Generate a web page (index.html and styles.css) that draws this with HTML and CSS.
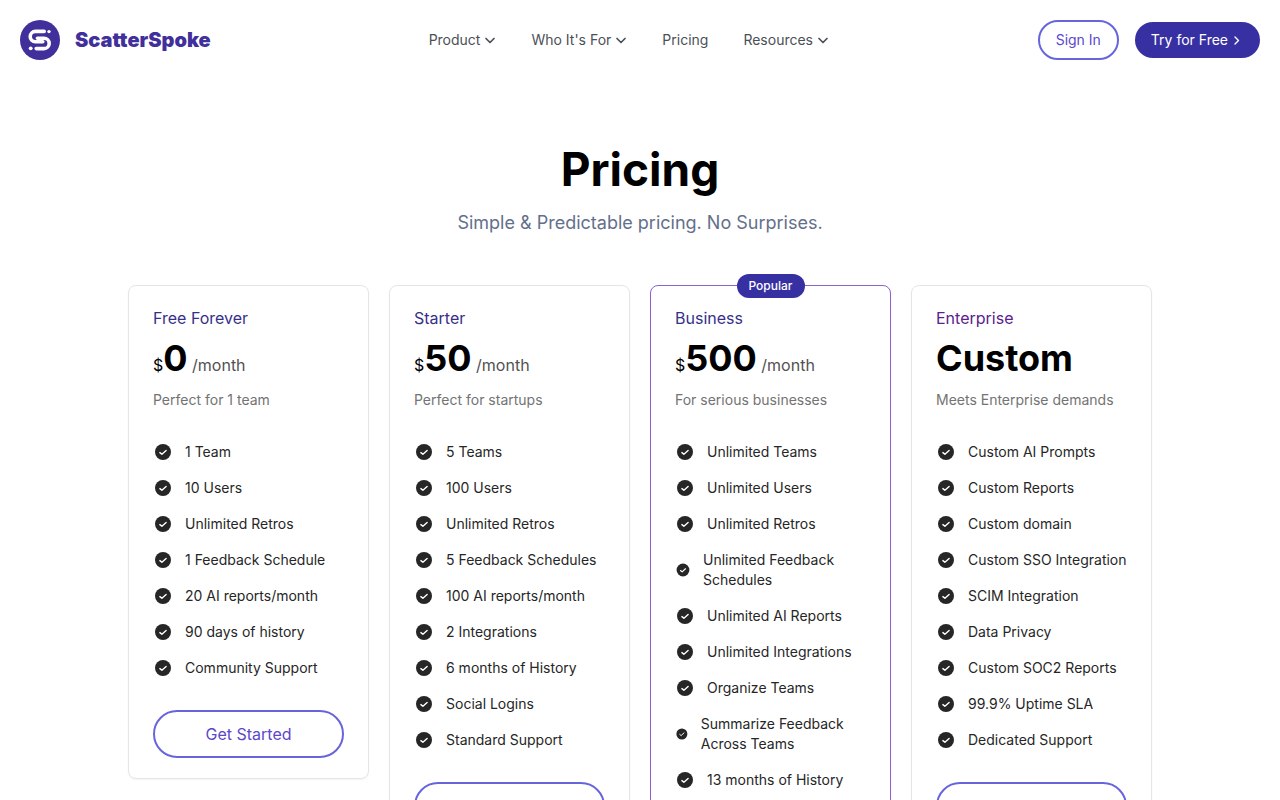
FILE: index.html
```html
<!DOCTYPE html>
<html lang="en">

<head>
  <meta charset="UTF-8" />
  <meta name="viewport" content="width=device-width, initial-scale=1.0" />
  <title>Pricing - ScatterSpoke</title>
  <link rel="stylesheet" href="styles.css">
</head>

<body>
  <!-- Shared icons -->
  <svg class="sprite" aria-hidden="true">
    <symbol id="check" viewBox="0 0 20 20">
      <circle cx="10" cy="10" r="8" fill="currentColor" />
      <path d="M6.9 10.6l2 1.7 4.2-3.9" fill="none" stroke="#fff" stroke-width="1.4" stroke-linecap="round" stroke-linejoin="round" />
    </symbol>
    <symbol id="chevron" viewBox="0 0 12 12">
      <path d="M2 4.5l4 4 4-4" fill="none" stroke="currentColor" stroke-width="1.7" stroke-linecap="round" stroke-linejoin="round" />
    </symbol>
  </svg>

  <!-- Header -->
  <header class="header">
    <a href="#" class="logo">
      <svg class="logo-mark" viewBox="0 0 40 40" aria-hidden="true">
        <circle cx="20" cy="20" r="20" fill="#41309b" />
        <path d="M24.2 11.4H15.4a5.2 5.2 0 0 0 0 10.4h7.4" fill="none" stroke="#fff" stroke-width="3.6" stroke-linecap="round" />
        <path d="M17.4 18.2h6.6a5.2 5.2 0 0 1 0 10.4h-7.8" fill="none" stroke="#fff" stroke-width="3.6" stroke-linecap="round" />
        <circle cx="29" cy="11.6" r="1.7" fill="#fff" />
        <circle cx="10.7" cy="28.3" r="1.9" fill="#fff" />
      </svg>
      <span class="logo-name">ScatterSpoke</span>
    </a>
    <nav class="nav">
      <button type="button" class="nav-item">Product <svg class="chevron"><use href="#chevron" /></svg></button>
      <button type="button" class="nav-item">Who It's For <svg class="chevron"><use href="#chevron" /></svg></button>
      <a href="#" class="nav-item">Pricing</a>
      <button type="button" class="nav-item">Resources <svg class="chevron"><use href="#chevron" /></svg></button>
    </nav>
    <div class="actions">
      <a href="#" class="sign-in">Sign In</a>
      <a href="#" class="try-free">Try for Free
        <svg class="arrow" viewBox="0 0 12 12"><path d="M3 3l3.5 3.5L3 10" fill="none" stroke="currentColor" stroke-width="1.4" stroke-linecap="round" stroke-linejoin="round" /></svg>
      </a>
    </div>
  </header>

  <!-- Pricing -->
  <main class="pricing">
    <h1>Pricing</h1>
    <p class="subtitle">Simple &amp; Predictable pricing. No Surprises.</p>

    <div class="plans">
      <section class="plan">
        <h2>Free Forever</h2>
        <p class="price">$<strong>0</strong> <span class="period">/month</span></p>
        <p class="about">Perfect for 1 team</p>
        <ul>
          <li><svg><use href="#check" /></svg><span>1 Team</span></li>
          <li><svg><use href="#check" /></svg><span>10 Users</span></li>
          <li><svg><use href="#check" /></svg><span>Unlimited Retros</span></li>
          <li><svg><use href="#check" /></svg><span>1 Feedback Schedule</span></li>
          <li><svg><use href="#check" /></svg><span>20 AI reports/month</span></li>
          <li><svg><use href="#check" /></svg><span>90 days of history</span></li>
          <li><svg><use href="#check" /></svg><span>Community Support</span></li>
        </ul>
        <a href="#" class="start">Get Started</a>
      </section>

      <section class="plan">
        <h2>Starter</h2>
        <p class="price">$<strong>50</strong> <span class="period">/month</span></p>
        <p class="about">Perfect for startups</p>
        <ul>
          <li><svg><use href="#check" /></svg><span>5 Teams</span></li>
          <li><svg><use href="#check" /></svg><span>100 Users</span></li>
          <li><svg><use href="#check" /></svg><span>Unlimited Retros</span></li>
          <li><svg><use href="#check" /></svg><span>5 Feedback Schedules</span></li>
          <li><svg><use href="#check" /></svg><span>100 AI reports/month</span></li>
          <li><svg><use href="#check" /></svg><span>2 Integrations</span></li>
          <li><svg><use href="#check" /></svg><span>6 months of History</span></li>
          <li><svg><use href="#check" /></svg><span>Social Logins</span></li>
          <li><svg><use href="#check" /></svg><span>Standard Support</span></li>
        </ul>
        <a href="#" class="start">Get Started</a>
      </section>

      <section class="plan popular">
        <span class="badge">Popular</span>
        <h2>Business</h2>
        <p class="price">$<strong>500</strong> <span class="period">/month</span></p>
        <p class="about">For serious businesses</p>
        <ul>
          <li><svg><use href="#check" /></svg><span>Unlimited Teams</span></li>
          <li><svg><use href="#check" /></svg><span>Unlimited Users</span></li>
          <li><svg><use href="#check" /></svg><span>Unlimited Retros</span></li>
          <li><svg><use href="#check" /></svg><span>Unlimited Feedback Schedules</span></li>
          <li><svg><use href="#check" /></svg><span>Unlimited AI Reports</span></li>
          <li><svg><use href="#check" /></svg><span>Unlimited Integrations</span></li>
          <li><svg><use href="#check" /></svg><span>Organize Teams</span></li>
          <li><svg><use href="#check" /></svg><span>Summarize Feedback Across Teams</span></li>
          <li><svg><use href="#check" /></svg><span>13 months of History</span></li>
        </ul>
        <a href="#" class="start">Get Started</a>
      </section>

      <section class="plan enterprise">
        <h2>Enterprise</h2>
        <p class="price"><strong>Custom</strong></p>
        <p class="about">Meets Enterprise demands</p>
        <ul>
          <li><svg><use href="#check" /></svg><span>Custom AI Prompts</span></li>
          <li><svg><use href="#check" /></svg><span>Custom Reports</span></li>
          <li><svg><use href="#check" /></svg><span>Custom domain</span></li>
          <li><svg><use href="#check" /></svg><span>Custom SSO Integration</span></li>
          <li><svg><use href="#check" /></svg><span>SCIM Integration</span></li>
          <li><svg><use href="#check" /></svg><span>Data Privacy</span></li>
          <li><svg><use href="#check" /></svg><span>Custom SOC2 Reports</span></li>
          <li><svg><use href="#check" /></svg><span>99.9% Uptime SLA</span></li>
          <li><svg><use href="#check" /></svg><span>Dedicated Support</span></li>
        </ul>
        <a href="#" class="start">Get Started</a>
      </section>
    </div>
  </main>
</body>

</html>
```
FILE: styles.css
```css
/* General Styles */
* {
  box-sizing: border-box;
}

body {
  margin: 0;
  font-family: Inter, "Liberation Sans", sans-serif;
  font-size: 16px;
  line-height: 24px;
  color: #000;
  background-color: #fff;
}

h1, h2, p, ul {
  margin: 0;
  padding: 0;
}

a {
  text-decoration: none;
}

.sprite {
  display: none;
}

/* Header */
.header {
  display: flex;
  align-items: center;
  justify-content: space-between;
  padding: 20px;
  font-size: 14px;
  line-height: 20px;
}

.logo {
  display: flex;
  align-items: center;
  gap: 15px;
  width: 200px;
  color: #41309b;
}

.logo-mark {
  width: 40px;
  height: 40px;
}

.logo-name {
  font-size: 20px;
  font-weight: 900;
}

.nav {
  display: flex;
  gap: 35px;
}

.nav-item {
  display: flex;
  align-items: center;
  gap: 4px;
  padding: 0;
  border: 0;
  background: none;
  font: inherit;
  color: #4b5057;
  cursor: pointer;
}

.chevron {
  width: 12px;
  height: 12px;
}

.actions {
  display: flex;
  align-items: center;
  gap: 16px;
}

.sign-in {
  padding: 8px 16px;
  border: 2px solid #6865dc;
  border-radius: 20px;
  color: #5b48cb;
}

.try-free {
  display: flex;
  align-items: center;
  gap: 4px;
  padding: 8px 16px;
  border-radius: 18px;
  background-color: #3730a3;
  color: #fff;
}

.arrow {
  width: 12px;
  height: 12px;
}

/* Pricing */
.pricing {
  max-width: 1064px;
  margin: 0 auto;
  padding: 65px 20px;
}

h1 {
  font-size: 46px;
  line-height: 48px;
  font-weight: 700;
  text-align: center;
}

.subtitle {
  margin-top: 16px;
  font-size: 18px;
  line-height: 28px;
  text-align: center;
  color: #64708b;
}

.plans {
  display: grid;
  grid-template-columns: repeat(4, 1fr);
  align-items: start;
  gap: 20px;
  margin-top: 48px;
}

.plan {
  position: relative;
  padding: 20px 24px;
  border: 1px solid #e5e5e5;
  border-radius: 8px;
  box-shadow: 0 1px 2px rgba(0, 0, 0, 0.05);
}

.popular {
  border-color: #8b63cc;
}

.badge {
  position: absolute;
  top: -12px;
  left: 50%;
  transform: translateX(-50%);
  padding: 0 12px;
  border-radius: 12px;
  background-color: #3730a3;
  color: #fff;
  font-size: 12px;
  font-weight: 500;
}

h2 {
  font-size: 16px;
  font-weight: 400;
  color: #37308a;
}

.enterprise h2 {
  color: #5b218c;
}

.price {
  margin-top: 8px;
}

.price strong {
  font-size: 36px;
  line-height: 40px;
  font-weight: 700;
}

.period {
  color: #525252;
}

.about {
  margin-top: 12px;
  font-size: 14px;
  line-height: 20px;
  color: #737373;
}

.plan ul {
  display: grid;
  gap: 16px;
  margin: 32px 0;
  list-style: none;
  font-size: 14px;
  line-height: 20px;
  color: #262626;
}

.plan li {
  display: flex;
  align-items: center;
}

.plan li svg {
  width: 20px;
  height: 20px;
  margin-right: 12px;
}

.start {
  display: block;
  padding: 10px;
  border: 2px solid #6865dc;
  border-radius: 24px;
  text-align: center;
  color: #5b48cb;
}
```
